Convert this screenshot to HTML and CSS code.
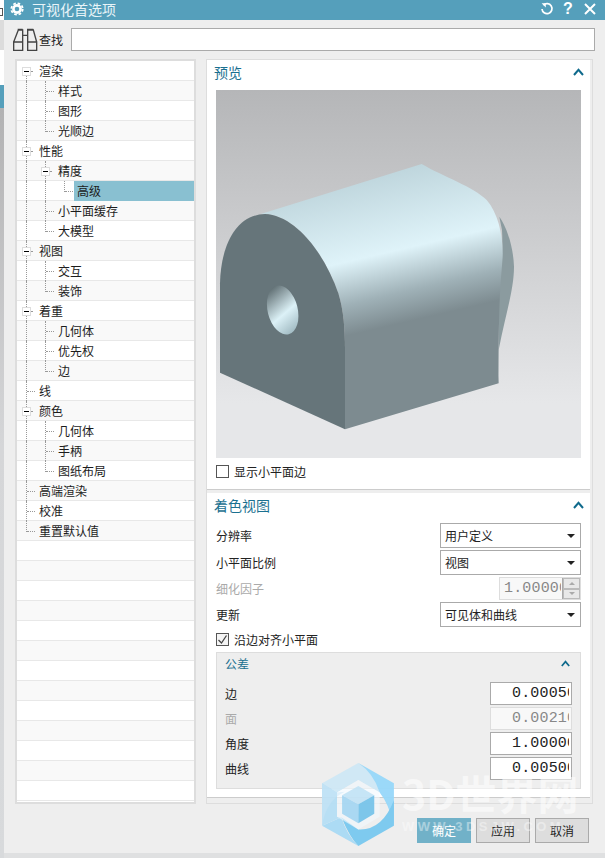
FILE: index.html
```html
<!DOCTYPE html>
<html lang="zh">
<head>
<meta charset="utf-8">
<title>可视化首选项</title>
<link rel="stylesheet" href="styles.css">
</head>
<body>
<div class="page">
  <div class="strip">
    <div class="strip-a"><span class="strip-glyph"></span></div>
    <div class="strip-b"></div>
    <div class="strip-c"></div>
    <div class="strip-d"></div>
    <div class="strip-e"></div>
  </div>
  <div class="dialog">
    <header class="titlebar">
      <svg class="gear" width="14" height="14" viewBox="0 0 14 14"><circle cx="7" cy="7" r="3.6" fill="none" stroke="#fff" stroke-width="2.6"/><circle cx="7" cy="7" r="5.7" fill="none" stroke="#fff" stroke-width="1.8" stroke-dasharray="2.6 1.87"/></svg>
      <span class="title">可视化首选项</span>
      <svg class="tb-refresh" width="14" height="14" viewBox="0 0 14 14"><path d="M3.4 3.2A5 5 0 1 1 2 7" fill="none" stroke="#fff" stroke-width="1.7"/><path d="M1.6 1.2h4.2v4.2z" fill="#fff"/></svg>
      <span class="tb-help">?</span>
      <svg class="tb-close" width="12" height="12" viewBox="0 0 12 12"><path d="M1 1l10 10M11 1L1 11" stroke="#fff" stroke-width="2"/></svg>
    </header>

    <div class="search">
      <svg class="binoc" width="25" height="24" viewBox="39 84 75 72"><path d="M41 126h27v25H41zM83 126h27v25H83zM41 126l14-36h13v36M83 126V90h17l10 36M68 106h15M55 90v-2h13M83 90v-2h17" fill="none" stroke="#444" stroke-width="4"/></svg>
      <span class="search-label">查找</span>
      <div class="search-input"></div>
    </div>

    <div class="main">
      <nav class="tree">
        <div class="row"><i class="g box first"></i><span class="t">渲染</span></div>
        <div class="row alt"><i class="g v"></i><i class="g tee"></i><span class="t">样式</span></div>
        <div class="row"><i class="g v"></i><i class="g tee"></i><span class="t">图形</span></div>
        <div class="row alt"><i class="g v"></i><i class="g ell"></i><span class="t">光顺边</span></div>
        <div class="row"><i class="g box"></i><span class="t">性能</span></div>
        <div class="row alt"><i class="g v"></i><i class="g box first-sub"></i><span class="t">精度</span></div>
        <div class="row"><i class="g v"></i><i class="g v"></i><i class="g ell"></i><span class="t sel">高级</span></div>
        <div class="row alt"><i class="g v"></i><i class="g tee"></i><span class="t">小平面缓存</span></div>
        <div class="row"><i class="g v"></i><i class="g ell"></i><span class="t">大模型</span></div>
        <div class="row alt"><i class="g box"></i><span class="t">视图</span></div>
        <div class="row"><i class="g v"></i><i class="g tee"></i><span class="t">交互</span></div>
        <div class="row alt"><i class="g v"></i><i class="g ell"></i><span class="t">装饰</span></div>
        <div class="row"><i class="g box"></i><span class="t">着重</span></div>
        <div class="row alt"><i class="g v"></i><i class="g tee"></i><span class="t">几何体</span></div>
        <div class="row"><i class="g v"></i><i class="g tee"></i><span class="t">优先权</span></div>
        <div class="row alt"><i class="g v"></i><i class="g ell"></i><span class="t">边</span></div>
        <div class="row"><i class="g tee"></i><span class="t">线</span></div>
        <div class="row alt"><i class="g box"></i><span class="t">颜色</span></div>
        <div class="row"><i class="g v"></i><i class="g tee"></i><span class="t">几何体</span></div>
        <div class="row alt"><i class="g v"></i><i class="g tee"></i><span class="t">手柄</span></div>
        <div class="row"><i class="g v"></i><i class="g ell"></i><span class="t">图纸布局</span></div>
        <div class="row alt"><i class="g tee"></i><span class="t">高端渲染</span></div>
        <div class="row"><i class="g tee"></i><span class="t">校准</span></div>
        <div class="row alt"><i class="g ell"></i><span class="t">重置默认值</span></div>
        <div class="row"></div><div class="row alt"></div><div class="row"></div><div class="row alt"></div>
        <div class="row"></div><div class="row alt"></div><div class="row"></div><div class="row alt"></div>
        <div class="row"></div><div class="row alt"></div><div class="row"></div><div class="row alt"></div>
        <div class="row"></div>
      </nav>

      <div class="content">
        <section class="section preview">
          <div class="sec-head"><h2>预览</h2><svg class="chev" width="11" height="8" viewBox="0 0 11 8"><path d="M1 7l4.5-5.2L10 7" fill="none" stroke="#0f6a8c" stroke-width="2"/></svg></div>
          <div class="viewport">
            <svg width="365" height="368" viewBox="18 -180 1095 1104">
              <defs>
                <linearGradient id="body" gradientUnits="userSpaceOnUse" x1="640" y1="42" x2="742" y2="480">
                  <stop offset="0" stop-color="#bfd6dd"/>
                  <stop offset=".52" stop-color="#dff3f9"/>
                  <stop offset=".8" stop-color="#9fb1b7"/>
                  <stop offset="1" stop-color="#7d8b90"/>
                </linearGradient>
                <linearGradient id="bore" x1=".35" y1="0" x2=".65" y2="1">
                  <stop offset="0" stop-color="#5f6e72"/>
                  <stop offset=".58" stop-color="#dcf1f7"/>
                  <stop offset="1" stop-color="#9fb9c1"/>
                </linearGradient>
              </defs>
              <path d="M868 200C890 230 910 290 912 350C912 420 885 500 866 600L866 420C870 380 880 310 876 240Z" fill="#8b9b9f"/>
              <path d="M150 193L635 42C700 80 790 110 830 150C865 190 880 260 878 320C872 400 866 440 866 700L405 838L405 600C405 530 400 480 385 430C340 300 250 195 165 192Z" fill="url(#body)"/>
              <path d="M30 668L30 400C32 300 70 195 165 192C250 195 340 300 385 430C400 480 405 530 405 600L405 838Z" fill="#66757a"/>
              <ellipse cx="218" cy="480" rx="45" ry="75" transform="rotate(-14 218 480)" fill="url(#bore)"/>
            </svg>
          </div>
          <label class="check-row preview-check"><span class="cb"></span><span>显示小平面边</span></label>
        </section>

        <section class="section shading">
          <div class="sec-head"><h2>着色视图</h2><svg class="chev" width="11" height="8" viewBox="0 0 11 8"><path d="M1 7l4.5-5.2L10 7" fill="none" stroke="#0f6a8c" stroke-width="2"/></svg></div>
          <div class="form">
            <div class="f-row"><span>分辨率</span><div class="select">用户定义</div></div>
            <div class="f-row"><span>小平面比例</span><div class="select">视图</div></div>
            <div class="f-row short off"><span>细化因子</span>
              <div class="spin"><span class="num">1.00000</span><span class="spin-btns"><b class="up"></b><b class="down"></b></span></div>
            </div>
            <div class="f-row"><span>更新</span><div class="select">可见体和曲线</div></div>
            <label class="check-row"><span class="cb on"><svg width="11" height="11" viewBox="0 0 11 11"><path d="M1.5 6l3 3 5-7.5" fill="none" stroke="#444" stroke-width="1.3"/></svg></span><span>沿边对齐小平面</span></label>
            <div class="group">
              <div class="group-head"><h3>公差</h3><svg width="9" height="7" viewBox="0 0 9 7"><path d="M.8 6l3.7-4.4L8.2 6" fill="none" stroke="#0f6a8c" stroke-width="1.7"/></svg></div>
              <div class="g-row"><span>边</span><div class="field"><span class="num">0.00050</span></div></div>
              <div class="g-row off"><span>面</span><div class="field"><span class="num">0.00210</span></div></div>
              <div class="g-row"><span>角度</span><div class="field"><span class="num">1.00000</span></div></div>
              <div class="g-row"><span>曲线</span><div class="field"><span class="num">0.00500</span></div></div>
            </div>
          </div>
        </section>
      </div>
    </div>

    <footer class="actions">
      <button class="btn primary">确定</button>
      <button class="btn">应用</button>
      <button class="btn">取消</button>
    </footer>
  </div>

  <div class="watermark">
    <svg class="wm-logo" width="72" height="83" viewBox="38 40 212 245">
      <path d="M145 40Q215 90 208 127L145 90L82 127L38 100Z" fill="#cfe8f6"/>
      <path d="M145 40L250 100V225Q235 160 208 127Q190 70 145 40Z" fill="#97d8fa"/>
      <path d="M250 150V225L145 285Q120 260 95 200L145 236Q215 240 250 150Z" fill="#79c9f0"/>
      <path d="M38 225L95 200Q110 250 145 285Z" fill="#a9daf5"/>
      <path d="M38 100L82 127V199L95 200L38 225Z" fill="#b6dff5"/>
      <path d="M38 225Q50 150 105 125L82 127L38 100Z" fill="#bfe2f6"/>
      <path d="M145 90L208 127V199L145 236L82 199V127Z" fill="#f2f9fd" fill-opacity=".65"/>
      <path d="M145 108L192 135L145 162L97 135Z" fill="#c4e4f6"/>
      <path d="M97 135L145 162V218L97 190Z" fill="#a7d7f3"/>
      <path d="M192 135V190L145 218V162Z" fill="#78c4ea"/>
    </svg>
    <div class="wm-text">
      <span class="wm-big">3D世界网</span>
      <span class="wm-url">WWW.3DSJW.COM</span>
    </div>
  </div>
</div>
</body>
</html>
```

FILE: styles.css
```css
* { box-sizing: border-box; }
html, body { margin: 0; padding: 0; }
body {
  width: 605px;
  height: 858px;
  overflow: hidden;
  background: #dfe0e1;
  font: 12px "Noto Sans CJK SC", "Liberation Sans", sans-serif;
  color: #222;
}
.page { position: relative; display: flex; width: 605px; height: 858px; overflow: hidden; }

/* sliver of the window behind the dialog */
.strip { width: 4px; display: flex; flex-direction: column; flex: none; }
.strip-a { height: 20px; background: #fff; position: relative; }
.strip-glyph { display: block; width: 3px; height: 8px; margin-top: 8px; border: 1px solid #555; border-left: 0; }
.strip-b { height: 30px; background: #dcdcdc; }
.strip-c { height: 35px; background: #fff; }
.strip-d { height: 23px; background: #559fbb; }
.strip-e { flex: 1; background: linear-gradient(#b2b2b3, #d5d6d8 45%, #d8dadc); }

.dialog { width: 601px; height: 853px; background: #eee; display: flex; flex-direction: column; flex: none; }

.titlebar { height: 20px; background: #559fbb; display: flex; align-items: center; padding-left: 6px; color: #fff; flex: none; }
.gear { margin-top: -2px; }
.title { font-size: 14px; line-height: 18px; margin-left: 8px; margin-top: -3px; color: #e8f4f8; }
.tb-refresh { margin-left: auto; margin-top: -2px; }
.tb-help { font: bold 16px/18px "Liberation Sans", sans-serif; margin-left: 9px; margin-top: -2px; width: 10px; }
.tb-close { margin-left: 11px; margin-right: 9px; margin-top: -3px; }

.search { height: 23px; margin: 8px 10px 0 9px; display: flex; align-items: center; flex: none; }
.binoc { flex: none; }
.search-label { margin-left: 1px; width: 32px; font-size: 12px; }
.search-input { flex: 1; height: 23px; background: #fff; border: 1px solid #aaa; }

.main { display: flex; margin: 8px 0 0 11px; height: 745px; flex: none; }

.tree { width: 181px; height: 745px; background: #fff; border: 2px solid #ddd; overflow: hidden; flex: none; }
.row { height: 20px; display: flex; border-bottom: 1px solid #e8e8e8; background: #fff; width: 177px; position: relative; z-index: 0; }
.row.alt { background: #f9f9f9; }
.row .g { width: 19px; height: 19px; flex: none; position: relative; display: block; }
.g.v::before, .g.tee::before, .g.ell::before, .g.box::before {
  content: ""; position: absolute; left: 9px; top: 0; height: 20px; border-left: 1px dotted #999; z-index: 1;
}
.g.ell::before { height: 11px; }
.g.tee::after, .g.ell::after {
  content: ""; position: absolute; left: 10px; top: 10px; width: 8px; border-top: 1px dotted #999;
}
.g.box {
  background-image:
    linear-gradient(#000, #000),
    linear-gradient(#fff, #fff),
    linear-gradient(#ddd, #ddd),
    linear-gradient(90deg, #999 50%, transparent 50%);
  background-size: 5px 1px, 7px 7px, 9px 9px, 4px 1px;
  background-position: 7px 10px, 6px 7px, 5px 6px, 14px 10px;
  background-repeat: no-repeat;
}
.g.box::before { z-index: -1; }
.g.box.first::before { top: 10px; height: 10px; }
.t { padding-left: 3px; line-height: 19px; white-space: nowrap; color: #1c1c1c; }
.t.sel { flex: 1; background: #89c0d1; height: 20px; margin-bottom: -1px; position: relative; z-index: 1; }

.content { width: 387px; height: 745px; margin-left: 10px; border: 1px solid #ddd; padding-right: 2px; flex: none; display: flex; flex-direction: column; background: #eee; }
.section { background: #fff; flex: none; border-bottom: 1px solid #ccc; }
.preview { height: 430px; padding: 0 9px; }
.shading { height: 305px; margin-top: 3px; padding: 0 9px; }
.sec-head { height: 30px; display: flex; align-items: center; justify-content: space-between; margin-left: -2px; margin-right: -3px; padding-bottom: 6px; }
.sec-head h2 { margin: 0; font-size: 14px; font-weight: 400; color: #1a7090; line-height: 24px; }
.viewport { width: 365px; height: 368px; background: linear-gradient(#b5b6b8, #e6e7e9 85%); }
.viewport svg { display: block; }

.check-row { display: flex; align-items: center; gap: 5px; height: 14px; }
.preview-check { margin-top: 6px; }
.cb { width: 13px; height: 13px; border: 1px solid #555; background: #fff; display: flex; align-items: center; justify-content: center; flex: none; }
.cb.on { background: #f4f4f4; }

.form { display: flex; flex-direction: column; }
.f-row { display: flex; align-items: center; justify-content: space-between; height: 25px; margin-bottom: 2px; }
.f-row.short { height: 23px; }
.off { color: #aaa; }
.select { width: 141px; height: 25px; border: 1px solid #aaa; background: #fff; line-height: 23px; padding-left: 4px; color: #222; position: relative; }
.select::after { content: ""; position: absolute; right: 5px; top: 10px; border: 4px solid transparent; border-top: 4px solid #222; border-bottom: 0; }

.num { display: block; font: 15px/21px "Liberation Mono", monospace; letter-spacing: .17px; overflow: hidden; white-space: nowrap; }
.spin { width: 82px; height: 23px; border: 1px solid #ddd; display: flex; background: #f8f8f8; }
.spin .num { width: 57px; margin-left: 4px; color: #888; }
.spin-btns { width: 18px; margin-left: auto; display: flex; flex-direction: column; border-left: 1px solid #aaa; }
.spin-btns b { flex: 1; background: #e8e8e8; border: 1px solid #bbb; display: flex; align-items: center; justify-content: center; }
.spin-btns b::after { content: ""; border: 3px solid transparent; }
.spin-btns .up::after { border-bottom: 3px solid #aaa; border-top: 0; }
.spin-btns .down::after { border-top: 3px solid #aaa; border-bottom: 0; }

.form > .check-row { margin-top: 3px; }

.group { height: 137px; margin-top: 6px; background: #eee; border: 1px solid #ddd; padding: 0 8px; display: flex; flex-direction: column; gap: 2px; }
.group-head { height: 27px; display: flex; align-items: center; justify-content: space-between; padding: 0 2px 6px 0; flex: none; }
.group-head h3 { margin: 0; font-size: 12px; font-weight: 400; color: #1a7090; }
.g-row { display: flex; align-items: center; justify-content: space-between; height: 23px; flex: none; }
.field { width: 82px; height: 23px; border: 1px solid #aaa; background: #fff; padding-left: 21px; }
.field .num { width: 57px; }
.g-row.off .field { border-color: #ddd; background: #f8f8f8; }
.g-row.off .num { color: #888; }

.actions { display: flex; justify-content: flex-end; gap: 5px; margin-top: 14px; padding-right: 16px; }
.btn { width: 54px; height: 25px; font: 12px "Noto Sans CJK SC", sans-serif; background: #ddd; border: 1px solid #aaa; color: #222; padding: 0; }
.btn.primary { background: #71b1c8; border-color: #71b1c8; color: #fff; }

.watermark { position: absolute; left: 322px; top: 763px; width: 270px; height: 83px; pointer-events: none; }
.wm-logo { position: absolute; left: 0; top: 0; opacity: .95; }
.wm-text { position: absolute; left: 80px; top: 4px; display: flex; flex-direction: column; color: #fff; }
.wm-big { font: bold 41px/50px "Noto Sans CJK SC", sans-serif; opacity: .55; white-space: nowrap; }
.wm-url { font: bold 13px/20px "Liberation Sans", sans-serif; letter-spacing: 3.4px; opacity: .4; white-space: nowrap; }
```
